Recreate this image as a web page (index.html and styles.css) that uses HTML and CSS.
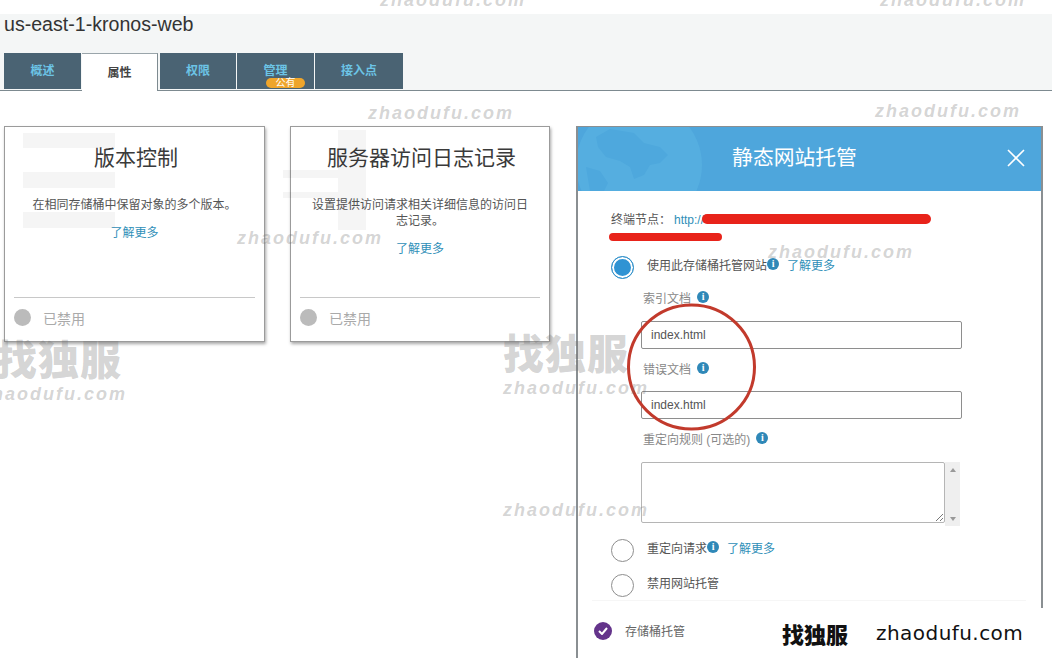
FILE: index.html
```html
<!DOCTYPE html>
<html lang="zh-CN">
<head>
<meta charset="utf-8">
<title>us-east-1-kronos-web</title>
<link rel="stylesheet" href="styles.css">
</head>
<body>
<div class="top-gap"></div>
<header class="bucket-head">
  <h1 class="bucket-title">us-east-1-kronos-web</h1>
  <nav class="tabs">
    <a class="tab tab-overview">概述</a>
    <a class="tab tab-active">属性</a>
    <a class="tab tab-perm">权限</a>
    <a class="tab tab-manage">管理<span class="badge">公有</span></a>
    <a class="tab tab-access">接入点</a>
  </nav>
</header>
<main class="content">
  <section class="card card-a">
    <h2 class="card-title">版本控制</h2>
    <p class="card-text">在相同存储桶中保留对象的多个版本。</p>
    <a class="card-link">了解更多</a>
    <div class="card-foot"><span class="dot"></span><span class="off">已禁用</span></div>
  </section>
  <section class="card card-b">
    <h2 class="card-title">服务器访问日志记录</h2>
    <p class="card-text">设置提供访问请求相关详细信息的访问日志记录。</p>
    <a class="card-link">了解更多</a>
    <div class="card-foot"><span class="dot"></span><span class="off">已禁用</span></div>
  </section>
  <section class="modal">
    <div class="modal-head">
      <svg class="globe" width="130" height="64" viewBox="0 0 130 64">
        <circle cx="61" cy="38" r="63" fill="#55aee0"/>
        <path d="M18 10l14-8 24 4 10 10 16 4 8 8-8 8-10 2-6 10-10 4-4-12-10-6-14-4-8-10z" fill="#4ea8dd"/>
        <path d="M8 40l14 4 8 12-4 8H12z" fill="#4ea8dd"/>
      </svg>
      <h2 class="modal-title">静态网站托管</h2>
      <svg class="close" width="18" height="18" viewBox="0 0 18 18"><path d="M1 1l16 16M17 1L1 17" stroke="#fff" stroke-width="1.6" fill="none"/></svg>
    </div>
    <div class="modal-body">
      <p class="endpoint"><span>终端节点：</span><a class="url">http://</a></p>
      <div class="option option-first">
        <span class="radio radio-on"></span>
        <span class="opt-text">使用此存储桶托管网站<i class="info">i</i><a class="more">了解更多</a></span>
      </div>
      <div class="fields">
        <label class="field-label label-first">索引文档<i class="info info-gap">i</i></label>
        <input class="text-input" value="index.html">
        <label class="field-label label-second">错误文档<i class="info info-gap">i</i></label>
        <input class="text-input" value="index.html">
        <label class="field-label label-third">重定向规则 (可选的)<i class="info info-gap">i</i></label>
        <div class="area-wrap">
          <div class="area">
            <svg class="grip" width="9" height="9" viewBox="0 0 9 9"><path d="M1 8l7-7M5 8l3-3" stroke="#777" fill="none"/></svg>
          </div>
          <div class="scroll"><span class="arrow-up"></span><span class="arrow-down"></span></div>
        </div>
      </div>
      <div class="option option-second">
        <span class="radio"></span>
        <span class="opt-text">重定向请求<i class="info">i</i><a class="more">了解更多</a></span>
      </div>
      <div class="option option-third">
        <span class="radio"></span>
        <span class="opt-text">禁用网站托管</span>
      </div>
    </div>
    <div class="modal-foot">
      <span class="check"><svg width="10" height="8" viewBox="0 0 10 8"><path d="M1 4l3 3 5-6" stroke="#fff" stroke-width="2" fill="none"/></svg></span>
      <span class="foot-text">存储桶托管</span>
    </div>
  </section>
</main>

<svg class="marks" width="1052" height="658" viewBox="0 0 1052 658">
  <g fill="#000" opacity=".035">
    <rect x="23" y="133" width="92" height="15"/><rect x="23" y="172" width="92" height="16"/><rect x="23" y="212" width="92" height="16"/>
    <rect x="283" y="170" width="55" height="8"/><rect x="283" y="192" width="55" height="6"/><rect x="338" y="130" width="28" height="100"/>
  </g>
  <path d="M707 219H926" stroke="#e8231a" stroke-width="10" stroke-linecap="round"/>
  <path d="M613 237H718" stroke="#e8231a" stroke-width="8" stroke-linecap="round"/>
  <ellipse cx="691.5" cy="367" rx="63" ry="62" fill="none" stroke="#c23a2c" stroke-width="3"/>
</svg>
<span class="wm wm-1">zhaodufu.com</span>
<span class="wm wm-2">zhaodufu.com</span>
<span class="wm wm-3">zhaodufu.com</span>
<span class="wm wm-4">zhaodufu.com</span>
<span class="wm wm-5">zhaodufu.com</span>
<span class="wm wm-6">zhaodufu.com</span>
<span class="wm wm-7">haodufu.com</span>
<span class="wm wm-8">zhaodufu.com</span>
<span class="wm wm-9">zhaodufu.com</span>
<span class="wm-big wm-big-1">找独服</span>
<span class="wm-big wm-big-2">找独服</span>
<div class="brand"><b class="brand-cn">找独服</b><span class="brand-en">zhaodufu.com</span></div>
</body>
</html>
```
FILE: styles.css
```css
* { box-sizing: border-box; }
html, body { margin: 0; height: 658px; overflow: hidden; }
body {
  position: relative;
  width: 1052px;
  background: #fff;
  color: #444;
  font-family: "Liberation Sans", "Noto Sans CJK SC", sans-serif;
  font-size: 12px;
}
.top-gap { height: 14px; }
.bucket-head {
  height: 77px;
  background: #f4f6f6;
  border-bottom: 1px solid #7d8a90;
  display: flex;
  flex-direction: column;
  justify-content: space-between;
}
.bucket-title {
  margin: 0;
  padding-left: 4px;
  font-size: 19.6px;
  line-height: 20px;
  font-weight: 400;
  color: #333;
}
.tabs { display: flex; align-items: flex-start; padding-left: 4px; height: 37px; }
.tab {
  position: relative;
  display: flex;
  align-items: center;
  justify-content: center;
  height: 36px;
  padding-bottom: 3px;
  margin-right: 1px;
  background: #4a6373;
  color: #6cc4e6;
  font-size: 12px;
  font-weight: 700;
}
.tab-overview { width: 77px; }
.tab-active {
  width: 76px;
  height: 38px;
  margin-right: 2px;
  background: #fff;
  color: #444;
  border-top: 1px solid #9aa5aa;
  border-right: 1px solid #7d8a90;
}
.tab-perm { width: 76px; }
.tab-manage { width: 77px; margin-right: 1px; }
.tab-access { width: 88px; margin-right: 0; }
.badge {
  position: absolute;
  left: 29px;
  top: 25px;
  width: 39px;
  height: 10px;
  border-radius: 5px;
  background: #efa52b;
  color: #fff;
  font-size: 10px;
  font-weight: 400;
  line-height: 10px;
  text-align: center;
}
.content {
  display: flex;
  align-items: flex-start;
  padding: 35px 0 0 4px;
}
.card {
  position: relative;
  display: flex;
  flex-direction: column;
  align-items: center;
  height: 216px;
  padding: 0 10px;
  background: #fff;
  border: 1px solid #9b9b9b;
  box-shadow: 1px 2px 3px rgba(0,0,0,.35);
}
.card-a { width: 261px; margin-right: 26px; }
.card-b { width: 260px; margin-right: 26px; margin-left: -1px; }
.card-title {
  margin: 17px 0 1px 3px;
  font-size: 21px;
  line-height: 28px;
  font-weight: 400;
  color: #3a3a3a;
}
.card-text {
  margin: 24px 8px 0;
  font-size: 12px;
  line-height: 16px;
  text-align: center;
  color: #555;
}
.card-link {
  margin-top: 12px;
  font-size: 12px;
  line-height: 16px;
  color: #2f8fb8;
}
.card-foot {
  position: absolute;
  left: 9px;
  right: 9px;
  bottom: 0;
  height: 44px;
  display: flex;
  align-items: center;
  gap: 12px;
  padding-bottom: 4px;
  border-top: 1px solid #c8c8c8;
}
.dot { width: 17px; height: 17px; border-radius: 50%; background: #bbb; }
.off { font-size: 14px; color: #aaa; }
.modal {
  position: relative;
  width: 467px;
  height: 560px;
  background: #fff;
  border: 1px solid #8a8f92;
  border-width: 1px 2px 0 2px;
}
.modal-head {
  position: relative;
  height: 64px;
  background: #4ea6dc;
  overflow: hidden;
  display: flex;
  align-items: center;
  justify-content: center;
}
.globe { position: absolute; left: 0; top: 0; }
.modal-title {
  position: relative;
  margin: 0 30px 6px 0;
  font-size: 20.8px;
  font-weight: 400;
  color: #fff;
}
.close { position: absolute; right: 16px; top: 22px; }
.modal-body { padding: 20px 0 0 33px; }
.endpoint { margin: 0; height: 43px; font-size: 12px; line-height: 18px; color: #555; }
.url { margin-left: 3px; color: #2f8fb8; }
.option { display: flex; align-items: center; height: 24px; }
.option-first { margin-top: 1px; }
.radio {
  flex: none;
  width: 23px;
  height: 23px;
  margin-right: 13px;
  border: 1px solid #8e8e8e;
  border-radius: 50%;
  background: #fff;
}
.radio-on {
  border-color: #2f8fc8;
  background: #2f93d3;
  box-shadow: inset 0 0 0 2px #fff;
}
.opt-text { display: flex; align-items: center; margin-top: -6px; font-size: 12px; color: #555; }
.info {
  display: inline-block;
  width: 12px;
  height: 12px;
  border-radius: 50%;
  background: #2f88b8;
  color: #fff;
  font: 700 10px/12px "Liberation Serif", serif;
  text-align: center;
}
.info-gap { margin-left: 6px; }
.more { margin-left: 8px; color: #2f8fb8; }
.fields { padding-left: 30px; }
.field-label {
  display: flex;
  align-items: center;
  height: 16px;
  font-size: 12px;
  color: #888;
  margin-left: 2px;
}
.label-first { margin-top: 10px; margin-bottom: 16px; }
.label-second { margin-top: 11px; margin-bottom: 15px; }
.label-third { margin-top: 11px; margin-bottom: 16px; }
.text-input {
  display: block;
  width: 321px;
  height: 28px;
  padding: 0 9px;
  border: 1px solid #8e8e8e;
  border-radius: 2px;
  background: #fff;
  color: #555;
  font: 12px "Liberation Sans", sans-serif;
}
.area-wrap { display: flex; align-items: flex-start; }
.area {
  position: relative;
  width: 304px;
  height: 61px;
  border: 1px solid #b5b5b5;
  border-radius: 2px;
  background: #fff;
}
.grip { position: absolute; right: 0; bottom: 0; }
.scroll {
  display: flex;
  flex-direction: column;
  justify-content: space-between;
  align-items: center;
  width: 15px;
  height: 64px;
  padding: 6px 0 5px;
  background: #efefef;
}
.arrow-up { border: 3px solid transparent; border-top: 0; border-bottom: 4px solid #999; }
.arrow-down { border: 3px solid transparent; border-bottom: 0; border-top: 4px solid #999; }
.option-second { margin-top: 12px; }
.option-third { margin-top: 11px; }
.modal-foot {
  position: absolute;
  left: 14px;
  top: 473px;
  width: 434px;
  height: 60px;
  display: flex;
  align-items: center;
  gap: 13px;
  padding: 0 0 0 2px;
  border-top: 1px solid #f6f6f6;
}
.check {
  display: flex;
  align-items: center;
  justify-content: center;
  width: 18px;
  height: 18px;
  border-radius: 50%;
  background: #64348b;
}
.foot-text { font-size: 12px; color: #666; }
.marks { position: absolute; left: 0; top: 0; pointer-events: none; }
.wm {
  position: absolute;
  font: italic 700 18px/20px "Liberation Sans", sans-serif;
  letter-spacing: 2px;
  color: rgba(110,110,110,.3);
  white-space: nowrap;
  pointer-events: none;
}
.wm-1 { left: 380px; top: -10px; }
.wm-2 { left: 880px; top: -10px; }
.wm-3 { left: 368px; top: 103px; }
.wm-4 { left: 875px; top: 101px; }
.wm-5 { left: 237px; top: 228px; }
.wm-6 { left: 768px; top: 242px; }
.wm-7 { left: -8px; top: 384px; }
.wm-8 { left: 503px; top: 378px; }
.wm-9 { left: 503px; top: 500px; }
.wm-big {
  position: absolute;
  font: 900 41px/48px "Noto Sans CJK SC", sans-serif;
  letter-spacing: 1px;
  color: rgba(110,110,110,.3);
  white-space: nowrap;
}
.wm-big-1 { left: -4px; top: 333px; }
.wm-big-2 { left: 503px; top: 327px; }
.brand {
  position: absolute;
  right: 0;
  top: 608px;
  width: 304px;
  height: 50px;
  display: flex;
  align-items: center;
  background: #fff;
  padding: 0 0 0 34px;
  color: #111;
}
.brand-cn { font: 900 22px/26px "Noto Sans CJK SC", sans-serif; }
.brand-en {
  margin-left: 28px;
  font: 20px/26px "DejaVu Sans", sans-serif;
  letter-spacing: .45px;
}
```
